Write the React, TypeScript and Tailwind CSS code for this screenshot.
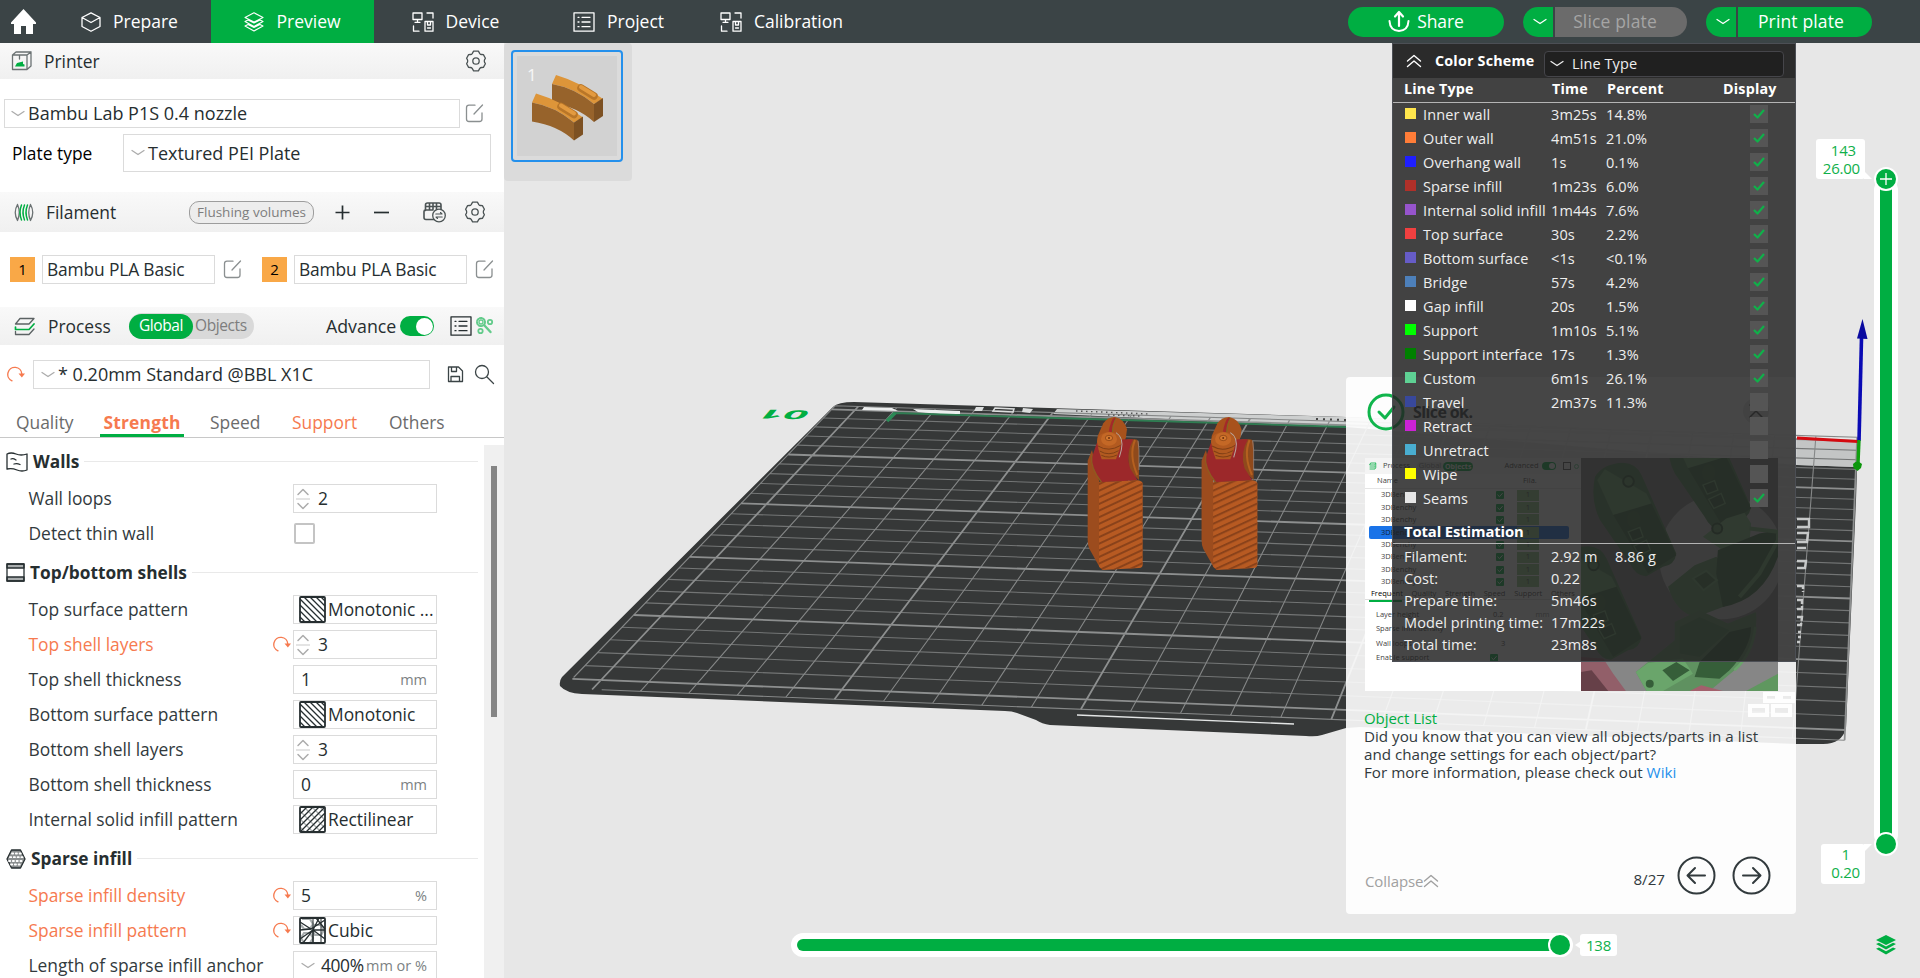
import React from "react";

type Pt = [number, number];

/* ---------- projection of the build plate ---------- */

const Q: Pt[] = [
  [855, 410],
  [1857, 441],
  [1845, 730],
  [601, 680],
];

function project(u: number, v: number): Pt {
  const [[x0, y0], [x1, y1], [x2, y2], [x3, y3]] = Q;
  const dx1 = x1 - x2, dy1 = y1 - y2, dx2 = x3 - x2, dy2 = y3 - y2;
  const sx = x0 - x1 + x2 - x3, sy = y0 - y1 + y2 - y3;
  const det = dx1 * dy2 - dx2 * dy1;
  const g = (sx * dy2 - dx2 * sy) / det;
  const h = (dx1 * sy - sx * dy1) / det;
  const s = u / 25, t = v / 25;
  const w = g * s + h * t + 1;
  return [
    ((x1 - x0 + g * x1) * s + (x3 - x0 + h * x3) * t + x0) / w,
    ((y1 - y0 + g * y1) * s + (y3 - y0 + h * y3) * t + y0) / w,
  ];
}

function seg(a: Pt, b: Pt) {
  return `M${a[0].toFixed(1)} ${a[1].toFixed(1)}L${b[0].toFixed(1)} ${b[1].toFixed(1)}`;
}

const idx = Array.from({ length: 26 }, (_, i) => i);
const vThin = idx.filter((i) => i % 5).map((i) => seg(project(i, -0.4), project(i, 25.7))).join("");
const vBold = idx.filter((i) => i % 5 === 0).map((i) => seg(project(i, -0.4), project(i, 25.7))).join("");
const hThin = idx.filter((i) => i % 5).map((i) => seg(project(-0.6, i), project(25, i))).join("");
const hBold = idx.filter((i) => i % 5 === 0).map((i) => seg(project(-0.6, i), project(25, i))).join("");
const border =
  seg(project(-0.6, 24.9), project(-0.6, -0.4)) +
  seg(project(-0.6, -0.4), project(25, -0.4)) +
  seg(project(0.2, 25.7), project(25, 25.7));

function Model() {
  return (
    <g>
      <path d="M143 108L160 70Q175 50 195 51Q222 56 231 88L228 112L214 150L140 150Z" fill="#a8521c" />
      <path d="M176 96Q182 60 192 53L198 54Q186 72 186 98Z" fill="#a32a2a" />
      <path d="M198 54Q188 72 187 98" fill="none" stroke="#6c7a20" strokeWidth="2" />
      <path d="M231 118H255Q266 118 267 132V240L240 215Q228 165 240 128Z" fill="#8f4a1c" />
      <path d="M255 120Q236 165 262 225" fill="none" stroke="#b5601f" strokeWidth="6" />
      <path d="M264 122L267 150V210" fill="none" stroke="#9a9090" strokeWidth="2" />
      <path d="M113 182L126 150L148 245V500L118 446Q113 435 113 420Z" fill="#9c4c1e" />
      <path d="M125 175L140 130L222 118H250Q226 160 240 205L263 241L155 247Q122 205 125 175Z" fill="#9c282a" />
      <path d="M125 165Q120 205 155 247" fill="none" stroke="#8e5a20" strokeWidth="4" />
      <path d="M147 247L263 241Q278 243 278 252V494Q278 503 268 504L158 510L147 500Z" fill="#b75a22" />
      <path d="M141 125Q142 98 178 95Q212 98 214 128L208 150L198 178H155L146 150Z" fill="#b25a20" />
      <ellipse cx="177" cy="117" rx="24" ry="20" fill="#c46826" />
      <ellipse cx="177" cy="114" rx="11" ry="8" fill="#d5792f" stroke="#7f3c12" strokeWidth="2" />
      <circle cx="177" cy="114" r="3" fill="#6d3210" />
      <path d="M144 138Q176 158 212 136M149 153Q176 170 206 152M154 166Q178 177 201 165" fill="none" stroke="#7f3f16" strokeWidth="3" />
      <path d="M198 98Q222 112 214 150L208 172" fill="none" stroke="#b9a9a0" strokeWidth="3" />
    </g>
  );
}

function Scene() {
  return (
    <svg className="absolute inset-0 h-full w-full" viewBox="504 43 1416 935">
      <defs>
        <pattern id="ridge" width="20" height="18" patternUnits="userSpaceOnUse" patternTransform="rotate(-25)">
          <rect width="20" height="6" fill="#8a421a" />
        </pattern>
        <g id="part">
          <Model />
          <path d="M147 247L263 241Q278 243 278 252V494Q278 503 268 504L158 510L147 500Z" fill="url(#ridge)" />
        </g>
      </defs>
      <path
        d="M833 407Q838 402 854 402L1346 417L1858 441L1856 500L1846 728Q1842 744 1823 744L1797 744L1360 727L1346 728L1322 735Q1316 737 1306 736L1050 725Q1042 724 1036 720L1017 713Q1012 711 1005 711L582 694Q566 693 560 686Q559 681 562 677Z"
        fill="#363838"
      />
      <path d="M1057 409L1346 417L1858 441L1857 467L1797 465L1346 427L1053 414Z" fill="#cdcfcf" />
      <path d="M1797 440L1858 442L1857 467L1797 465Z" fill="#c3c5c5" />
      <path d={hThin} stroke="#737575" strokeWidth="1.1" fill="none" />
      <path d={vThin + border} stroke="#858787" strokeWidth="1.1" fill="none" />
      <path d={hBold + vBold} stroke="#8d8f8f" strokeWidth="1.8" fill="none" />
      <path d="M864 407L892 408L898 411L862 410ZM913 409L960 411V414L940 414L918 412Z" fill="#eceeee" />
      <path d="M976 407L984 407L982 411L974 411ZM1023 408L1033 409L1030 413L1022 412Z" fill="#dcdede" />
      <path d="M995 408L1014 409L1013 412L993 411Z" fill="none" stroke="#dcdede" strokeWidth="1.5" />
      <path d="M1076 411L1150 414M1108 415L1140 416" stroke="#555" strokeWidth="1.4" strokeDasharray="1.5 3.5" />
      <path d="M1316 419L1346 420" stroke="#444" strokeWidth="2" strokeDasharray="2 5" />
      <path d="M888 421L895 413L1346 427" stroke="#2f7d52" strokeWidth="1.8" fill="none" />
      <path d="M887 421L895 413" stroke="#2b8a56" strokeWidth="3.5" />
      <path d="M1077 715L1294 724" stroke="#e3e5e5" strokeWidth="1.3" />
      <text
        transform="translate(812 410.5) rotate(181) skewX(-40) scale(3.4 1)"
        fontFamily="Open Sans"
        fontWeight="700"
        fontSize="12.5"
        fill="#00ae42"
      >
        01
      </text>
      <g stroke="#c6c8c8" strokeWidth="2.4" fill="none">
        <path d="M1797 519L1809 519V527L1797 527M1797 533L1808 533L1807 542H1797M1797 548L1806 548M1797 561L1806 561L1805 568L1797 568" />
        <path d="M1797 586H1803V592M1797 600H1802V609H1797M1797 617H1802L1801 625H1797" strokeDasharray="9 2" />
        <path d="M1798 632H1801M1798 637H1801M1797 642H1800" />
        <path d="M1765 694h12v7h-12zM1781 694h12v7h-12zM1750 706h17v9h-17zM1773 706h17v9h-17z" strokeWidth="4" stroke="#f0f0f0" />
      </g>
      <g transform="translate(1050 400) scale(0.3333)">
        <use href="#part" />
        <use href="#part" transform="translate(340 0) scale(1.015 1)" />
      </g>
      <path d="M1797 438L1858 441.5" stroke="#d40a10" strokeWidth="3" />
      <path d="M1859 441L1861.5 338" stroke="#0a0ab4" strokeWidth="3.6" />
      <path d="M1862.5 319L1867.5 339L1857 338.500Z" fill="#0a0aa0" />
      <path d="M1859 440L1858 464" stroke="#10a010" strokeWidth="3.4" />
      <path d="M1853 464q4-5 9 0l-1 4l-3.500 3l-4-3z" fill="#0c960c" />
    </svg>
  );
}

/* ---------- icons ---------- */

type IconProps = { className?: string };

const Svg = ({ w, h, className = "", children }: { w: number; h: number; className?: string; children: React.ReactNode }) => (
  <svg width={w} height={h} viewBox={`0 0 ${w} ${h}`} className={"shrink-0 " + className} fill="none" stroke="currentColor" strokeWidth="1.3" strokeLinecap="round" strokeLinejoin="round">
    {children}
  </svg>
);

const HomeIcon = () => (
  <Svg w={26} h={26}>
    <path d="M12.500 0L25 13.500V15H22V25H15V17H10V25H3V15H0V13.500Z" fill="#fff" stroke="none" />
  </Svg>
);
const CubeIcon = () => (
  <Svg w={20} h={20}>
    <path d="M10 .8L19 5.500V14.500L10 19.300L1 14.500V5.500ZM1 5.500L10 10.500L19 5.500" />
  </Svg>
);
const LayersIcon = () => (
  <Svg w={20} h={20}>
    <path d="M10 .8L19 5.500L10 10L1 5.500ZM1 9.500L4 8L10 11L16 8L19 9.500L10 14.500ZM1 14L4 12.500L10 15.500L16 12.500L19 14L10 19Z" strokeWidth="1.1" />
  </Svg>
);
const DeviceIcon = () => (
  <Svg w={22} h={20}>
    <path d="M1 1H10V7.500H1ZM5.500 7.500V10M3 10.300H8M15 1H21V6M1.500 14V19.200H7M13 9.500H21V19.200H13ZM15.500 9.500V13H18.500V9.500M15.500 16H18.500" />
  </Svg>
);
const ListIcon = ({ className }: IconProps) => (
  <Svg w={22} h={20} className={className}>
    <path d="M1 .8H21V19.200H1ZM5 5.300H6M9 5.300H17M5 10H6M9 10H17M5 14.700H6M9 14.700H17" />
  </Svg>
);
const EditIcon = () => (
  <Svg w={20} h={19} className="text-[#8a8f90]">
    <path d="M10 1.200H4Q1.500 1.200 1.500 3.700V15Q1.500 17.500 4 17.500H14.500Q17 17.500 17 15V9M9 10L17.500 1" />
  </Svg>
);
const GearIcon = () => (
  <Svg w={22} h={22} className="text-[#4b5354]">
    <path d="M7.200 3.600L8.600 1.200H13.400L14.800 3.600Q15.500 4.600 16.800 4.500L18.400 4.600L20.400 8.200L19.600 9.600Q19 11 19.600 12.400L20.400 13.800L18.400 17.400L16.800 17.500Q15.500 17.400 14.800 18.400L13.400 20.800H8.600L7.200 18.400Q6.500 17.400 5.200 17.500L3.600 17.400L1.600 13.800L2.400 12.400Q3 11 2.400 9.600L1.600 8.200L3.600 4.600L5.200 4.500Q6.500 4.600 7.200 3.600Z" />
    <circle cx="11" cy="11" r="3.200" />
  </Svg>
);
const Chev = ({ className = "" }: IconProps) => (
  <Svg w={14} h={8} className={className}>
    <path d="M1 1.500L7 5.500L13 1.500" />
  </Svg>
);
const RevertIcon = ({ className = "" }: IconProps) => (
  <Svg w={18} h={17} className={"text-[#f67a4f] " + className}>
    <path d="M5 14.800A7 7 0 1 1 14.800 8" strokeWidth="1.400" />
    <path d="M11.500 7.500H18L14.900 11.500Z" fill="#f67a4f" stroke="none" />
  </Svg>
);
const DoubleUp = ({ className = "" }: IconProps) => (
  <Svg w={16} h={14} className={className}>
    <path d="M1.500 7L8 1.500L14.500 7M1.500 12.500L8 7L14.500 12.500" strokeWidth="1.400" />
  </Svg>
);

/* ---------- top bar ---------- */

function Tab({ icon, label, active }: { icon: React.ReactNode; label: string; active?: boolean }) {
  return (
    <div className={"flex h-full w-[163px] items-center justify-center gap-3 text-[17.5px] text-white " + (active ? "bg-[#00ae42]" : "")}>
      {icon}
      <span>{label}</span>
    </div>
  );
}

function TopBar() {
  return (
    <header className="flex h-[43px] shrink-0 items-center bg-[#3b4446] text-white">
      <div className="flex w-12 pl-[11px]">
        <HomeIcon />
      </div>
      <Tab icon={<CubeIcon />} label="Prepare" />
      <Tab icon={<LayersIcon />} label="Preview" active />
      <Tab icon={<DeviceIcon />} label="Device" />
      <Tab icon={<ListIcon />} label="Project" />
      <Tab icon={<DeviceIcon />} label="Calibration" />
      <div className="ml-auto flex h-[30px] pr-[48px] text-[17.5px] tracking-[0.15px]">
        <div className="mr-[19px] flex w-[156px] items-center justify-center gap-[7px] rounded-full bg-[#00ae42]">
          <Svg w={22} h={23}>
            <path d="M11 16V3M7 6.500L11 2L15 6.500" strokeWidth="2.200" />
            <path d="M1.500 11Q2 20.500 11 21Q20 20.500 20.500 11" strokeWidth="2" />
          </Svg>
          <span className="tracking-[-0.1px]">Share</span>
        </div>
        <div className="flex w-[30px] items-center justify-center rounded-l-full bg-[#00ae42] pl-1">
          <Chev />
        </div>
        <div className="mr-[19px] ml-[2px] flex w-[132px] items-center justify-center rounded-r-full bg-[#6b6b6b] pr-3 text-[#a5a5a5]">Slice plate</div>
        <div className="flex w-[30px] items-center justify-center rounded-l-full bg-[#00ae42] pl-1">
          <Chev />
        </div>
        <div className="ml-[2px] flex w-[134px] items-center justify-center rounded-r-full bg-[#00ae42] pr-2">Print plate</div>
      </div>
    </header>
  );
}

/* ---------- left panel ---------- */

const headCls = "flex shrink-0 items-center bg-gradient-to-b from-[#f9f9f9] to-[#f0f0f0]";
const boxCls = "flex items-center border border-[#dbdbdb] bg-white";

function Slot({ n, className = "" }: { n: string; className?: string }) {
  return (
    <div className={"flex items-center " + className}>
      <div className="flex h-[25px] w-[25px] items-center justify-center bg-[#f9a847] text-[15px] text-black">{n}</div>
      <div className={boxCls + " mr-2 ml-[7px] h-[29px] w-[173px] pl-[4px] tracking-[-0.15px]"}>Bambu PLA Basic</div>
      <EditIcon />
    </div>
  );
}

function Section({ icon, title }: { icon: React.ReactNode; title: string }) {
  return (
    <div className="flex h-[41px] shrink-0 items-center pt-[2px] pl-[6px] text-[17.3px] font-bold text-[#262e30]">
      {icon}
      <span className="ml-[5px]">{title}</span>
      <div className="mr-[6px] ml-[5px] h-px flex-1 bg-[#e9e9e9]" />
    </div>
  );
}

function Spin() {
  return (
    <Svg w={14} h={22} className="ml-[2px] text-[#acacac]">
      <path d="M2 6.500L7 1.500L12 6.500M2 15.500L7 20.500L12 15.500" strokeWidth="1.500" />
      <path d="M0 11H14" stroke="#dbdbdb" />
    </Svg>
  );
}

function Pattern({ kind }: { kind: "mono" | "rect" | "cubic" }) {
  return (
    <svg width="27" height="27" viewBox="0 0 27 27" className="ml-[5px] shrink-0" fill="none" stroke="#262e30" strokeWidth="1.3">
      {kind === "mono" && <path d="M1 21L6 26M1 15L12 26M1 9L18 26M1 3L24 26M5 1L26 22M11 1L26 16M17 1L26 10M22 1L26 5" />}
      {kind === "rect" && (
        <>
          <path d="M1 21L6 26M1 13L14 26M1 5L22 26M5 1L26 22M13 1L26 14M21 1L26 6" stroke="#a8adae" />
          <path d="M1 8L8 1M1 14L14 1M1 20L20 1M1 26L26 1M7 26L26 7M13 26L26 13M19 26L26 19" />
        </>
      )}
      {kind === "cubic" && (
        <>
          <path d="M3 2h8l3 5l-3 5H5L2 8M16 8h6l3 5l-3 5h-6l-3-5zM5 16h6l3 5l-3 5H5l-3-5z" stroke="#a8adae" strokeWidth="2.200" />
          <path d="M1 5L12 12L26 3M1 13L12 12M1 22L14 13L26 22M4 26L14 13L20 1M14 13V26M17 1L26 12M14 13L26 13" />
          <path d="M14 1V26M22 1V26" strokeWidth="1" />
        </>
      )}
      <rect x="1" y="1" width="25" height="25" rx="1" strokeWidth="1.8" />
    </svg>
  );
}

type RowProps = { label: string; changed?: boolean; value?: string; unit?: string; spin?: boolean; pattern?: "mono" | "rect" | "cubic"; check?: boolean; drop?: boolean };

function Row({ label, changed, value, unit, spin, pattern, check, drop }: RowProps) {
  return (
    <div className="flex h-[35px] shrink-0 items-center pl-[28.5px]">
      <span className={"w-[244px] whitespace-nowrap " + (changed ? "text-[#f67a4f]" : "text-[#323a3d]")}>{label}</span>
      <span className="flex w-[20.5px]">{changed && <RevertIcon />}</span>
      {check ? (
        <div className="ml-px h-[21px] w-[21px] rounded-xs border-2 border-[#c4c4c4]" />
      ) : (
        <div className={boxCls + " h-[29px] w-[144px]"}>
          {spin && <Spin />}
          {drop && <Chev className="ml-[7px] text-[#acacac]" />}
          {pattern && <Pattern kind={pattern} />}
          <span className={"whitespace-nowrap text-[#262e30] " + (spin ? "ml-[8px]" : pattern ? "ml-[2px]" : drop ? "ml-[6px] tracking-[-0.4px]" : "ml-[7px]")}>{value}</span>
          {unit && <span className="mr-[9px] ml-auto text-[14.5px] whitespace-nowrap text-[#7c8283]">{unit}</span>}
        </div>
      )}
    </div>
  );
}

function Sidebar() {
  return (
    <aside className="flex w-[504px] shrink-0 flex-col overflow-hidden bg-white text-[17.4px] text-[#262e30]">
      <div className={headCls + " h-9 pr-[17px] pl-[11px]"}>
        <Svg w={22} h={20} className="text-[#6b7273]">
          <path d="M1.500 4L5 1H20V15L16 18.500H1.500ZM1.500 4H16V18.500M16 4L20 1M8.500 4V8" />
          <path d="M4 15.500L6 12L12 10.500V13L13.500 13.500V15.500Z" fill="#00ae42" stroke="none" />
        </Svg>
        <span className="ml-[11px]">Printer</span>
        <div className="ml-auto">
          <GearIcon />
        </div>
      </div>
      <div className="mt-5 flex items-center pl-1">
        <div className={boxCls + " mr-[5px] h-[29px] w-[456px] pl-[6px] text-[18px]"}>
          <Chev className="mr-[3px] text-[#acacac]" />
          Bambu Lab P1S 0.4 nozzle
        </div>
        <EditIcon />
      </div>
      <div className="mt-[6px] flex items-center pl-[12px] text-black">
        <span className="w-[111px]">Plate type</span>
        <div className={boxCls + " h-[38px] w-[368px] pl-[7px] text-[18px] text-[#262e30]"}>
          <Chev className="mr-[3px] text-[#acacac]" />
          Textured PEI Plate
        </div>
      </div>
      <div className={headCls + " mt-5 h-10 pr-[18px] pl-[14px]"}>
        <Svg w={20} h={19} className="text-[#6b7273]">
          <path d="M3.500 1.500Q-1 9.500 3.500 17.500M16.500 1.500Q21 9.500 16.500 17.500M3.500 1.500Q7 9.500 3.500 17.500M16.500 1.500Q13 9.500 16.500 17.500" />
          <path d="M7.500 2Q4.500 9.500 7.500 17M10.500 2Q7.500 9.500 10.500 17M13.500 2Q10.500 9.500 13.500 17" stroke="#00ae42" strokeWidth="1.500" />
        </Svg>
        <span className="ml-[12px]">Filament</span>
        <div className="ml-auto flex h-[23px] w-[125px] items-center justify-center rounded-[10px] border border-[#9d9d9d] bg-[#ededed] text-[13.5px] text-[#7d7d7d]">Flushing volumes</div>
        <Svg w={17} h={17} className="ml-[20px]">
          <path d="M8.500 1.500V15.500M1.500 8.500H15.500" strokeLinecap="butt" strokeWidth="1.700" />
        </Svg>
        <Svg w={17} h={17} className="ml-[22px]">
          <path d="M1 8.500H16" strokeLinecap="butt" strokeWidth="1.700" />
        </Svg>
        <Svg w={25} h={22} className="ml-[32px] text-[#4b5354]">
          <path d="M3.500 9.500V4Q3.500 2 5.500 2H17Q19 2 19 4V8.500M7.500 2V8.500M11 2V8.500M14.500 2V8.500M4.500 5.500H18M12 18.500H4Q2 18.500 2 16.500V10.500Q2 9 3.500 9H11" strokeWidth="1.600" />
          <circle cx="17" cy="14.500" r="6.300" />
          <path d="M13.800 13H20L18.500 11.500M20.200 16H14L15.500 17.500" strokeWidth="1.100" />
        </Svg>
        <div className="ml-[17px] flex">
          <GearIcon />
        </div>
      </div>
      <div className="mt-[23px] flex pl-[10px]">
        <Slot n="1" />
        <Slot n="2" className="ml-[19px]" />
      </div>
      <div className={headCls + " mt-[23px] h-[38px] pl-[14px]"}>
        <Svg w={21} h={19} className="text-[#5b6263]">
          <path d="M6 1.500H20L15 7H1.500ZM1.500 14.500V17.500H15L20 12" />
          <path d="M1.500 10V12.500H15L20 7" stroke="#00ae42" strokeWidth="1.700" />
        </Svg>
        <span className="ml-[13px] w-[81px]">Process</span>
        <div className="flex h-[26px] w-[125px] items-center rounded-full bg-[#d9d9d9] text-[15.5px] tracking-[-0.4px]">
          <div className="flex h-[25px] w-16 items-center justify-center rounded-full bg-[#00ae42] font-medium text-white">Global</div>
          <span className="ml-[2px] text-[#7d7d7d]">Objects</span>
        </div>
        <span className="ml-[72px] w-[74px] text-[17.8px]">Advance</span>
        <div className="flex h-5 w-[34px] items-center justify-end rounded-full bg-[#00ae42] pr-px">
          <div className="h-[17px] w-[17px] rounded-full bg-white" />
        </div>
        <ListIcon className="ml-[16px]" />
        <Svg w={20} h={20} className="ml-[3px] text-[#63cb8b]">
          <circle cx="6" cy="6" r="4" strokeWidth="2" strokeDasharray="2 1.400" />
          <circle cx="6" cy="6" r="2" />
          <circle cx="15" cy="6" r="2.200" strokeWidth="1.800" />
          <circle cx="5.500" cy="15" r="2.200" strokeWidth="1.800" />
          <path d="M9.500 9.500L15.500 16" strokeWidth="2.400" />
        </Svg>
      </div>
      <div className="mt-[15px] flex items-center pl-[7px]">
        <RevertIcon />
        <div className={boxCls + " ml-2 h-[29px] w-[397px] pl-[7px] text-[18px]"}>
          <Chev className="mr-[3px] text-[#acacac]" />* 0.20mm Standard @BBL X1C
        </div>
        <Svg w={17} h={17} className="ml-[17px] text-[#3b4446]">
          <path d="M1.500 1H11.500L15.500 5V15.500H1.500ZM4 15.500V10.500H12.500V15.500M4.500 1V5.500H9.500V1" />
        </Svg>
        <Svg w={21} h={21} className="ml-[10px] text-[#3b4446]">
          <circle cx="8" cy="8" r="6.500" />
          <path d="M13 13L19.500 19.500" />
        </Svg>
      </div>
      <div className="mt-[20px] flex h-[29px] shrink-0 border-b border-[#c8c8c8] pl-4 text-[#6b6b6b]">
        <span className="w-[84px]">Quality</span>
        <div className="relative flex w-[84px] justify-center border-b-[3px] border-[#00ae42] font-bold tracking-[0.2px] text-[#f67a4f]">Strength</div>
        <span className="ml-[26px] w-[82px]">Speed</span>
        <span className="w-[97px] text-[#f67a4f]">Support</span>
        <span>Others</span>
      </div>
      <div className="mt-[7px] flex min-h-0 flex-1">
        <div className="-mt-[5px] flex w-[484px] flex-col overflow-hidden">
          <Section
            title="Walls"
            icon={
              <Svg w={22} h={20}>
                <path d="M1 2Q5 0 10 2T21 2V18Q16 20 11 18T1 17ZM5 7Q7 6 10 8M8 12Q11 11 14 12.500" />
              </Svg>
            }
          />
          <Row label="Wall loops" value="2" spin />
          <Row label="Detect thin wall" check />
          <Section
            title="Top/bottom shells"
            icon={
              <Svg w={19} h={19}>
                <path d="M1 1H18V5H1ZM1 14H18V18H1Z" fill="#a9adae" />
                <path d="M1 1H18V18H1Z" />
              </Svg>
            }
          />
          <Row label="Top surface pattern" value="Monotonic ..." pattern="mono" />
          <Row label="Top shell layers" value="3" spin changed />
          <Row label="Top shell thickness" value="1" unit="mm" />
          <Row label="Bottom surface pattern" value="Monotonic" pattern="mono" />
          <Row label="Bottom shell layers" value="3" spin />
          <Row label="Bottom shell thickness" value="0" unit="mm" />
          <Row label="Internal solid infill pattern" value="Rectilinear" pattern="rect" />
          <Section
            title="Sparse infill"
            icon={
              <Svg w={20} h={20}>
                <path d="M5.500 1H14.500L19 10L14.500 19H5.500L1 10Z" fill="#8b8f90" />
                <path d="M6 4.500H15M4 8.200H17M3 12H17M5 15.500H15" stroke="#fff" strokeWidth="1.800" strokeDasharray="1.200 2.600" />
              </Svg>
            }
          />
          <Row label="Sparse infill density" value="5" unit="%" changed />
          <Row label="Sparse infill pattern" value="Cubic" pattern="cubic" changed />
          <Row label="Length of sparse infill anchor" value="400%" unit="mm or %" drop />
        </div>
        <div className="w-5 bg-[#f0f0f0] pt-[21px] pl-[7px]">
          <div className="h-[251px] w-[6px] bg-[#858585]" />
        </div>
      </div>
    </aside>
  );
}

/* ---------- plate thumbnail ---------- */

function PlateThumb() {
  return (
    <div className="absolute top-0 left-0 h-[138px] w-[128px] rounded-[4px] bg-[#dbdbdb] pt-[7px] pl-[7px]">
      <div className="flex h-[112px] w-[112px] items-center justify-center rounded-[4px] border-2 border-[#2490ec]">
        <div className="relative h-[100px] w-[100px] bg-[#d2d2d2]">
          <span className="absolute top-[6px] left-[10px] text-[17px] text-white/80">1</span>
          <svg className="absolute inset-0" width="100" height="100" viewBox="517 56 100 100">
            <g id="blk">
              <path d="M552 84L556 75Q580 82 603 99L594 104Q575 88 552 84Z" fill="#dd9539" />
              <path d="M552 84Q575 88 594 104L594 122Q578 107 552 103Z" fill="#97632b" />
              <path d="M594 104L603 98V116L594 122Z" fill="#7d5123" />
              <path d="M581 88L594 96" stroke="#b97628" strokeWidth="7.500" strokeLinecap="round" />
              <path d="M581 87L594 95" stroke="#e39a3f" strokeWidth="4" strokeLinecap="round" />
            </g>
            <use href="#blk" transform="translate(-20 18.500)" />
          </svg>
        </div>
      </div>
    </div>
  );
}

/* ---------- notification ---------- */

const MiniCheck = () => (
  <Svg w={8} h={8} className="rounded-[1px] bg-[#00ae42] text-white">
    <path d="M1.800 4L3.500 5.700L6.300 2.500" strokeWidth="1" />
  </Svg>
);

function MiniPanel() {
  return (
    <div className="flex w-[216px] flex-col bg-white text-[7.5px] leading-none text-[#444]">
      <div className="flex h-4 items-center bg-[#f4f4f4] pl-1">
        <Svg w={8} h={8} className="text-[#00ae42]">
          <path d="M2 1H7L6 3H1ZM1 5H6L7 3M1 7H6L7 5" strokeWidth=".8" />
        </Svg>
        <span className="ml-[6px] w-[34px]">Process</span>
        <span className="w-[26px] rounded-full bg-[#e2e2e2] text-center text-[#888]">Global</span>
        <span className="rounded-full bg-[#00ae42] px-[2px] py-[1px] text-[7px] font-bold text-white">Objects</span>
        <span className="ml-[31px]">Advanced</span>
        <div className="ml-[3px] flex h-[8px] w-[14px] justify-end rounded-full bg-[#00ae42] p-px">
          <div className="h-[6px] w-[6px] rounded-full bg-white" />
        </div>
        <div className="ml-[7px] h-[8px] w-[8px] border border-[#555]" />
        <div className="ml-[3px] h-[5px] w-[5px] rounded-full border border-[#63cb8b]" />
      </div>
      <div className="flex h-[15px] items-center border-b border-[#e5e5e5] pl-3">
        <span className="w-[146px]">Name</span>Fila.
      </div>
      <div className="flex flex-col pr-[12px] pl-[4px]">
        {[0, 1, 2, 3, 4, 5, 6, 7].map((i) => (
          <div key={i} className={"flex h-[12.4px] items-center rounded-[2px] pl-3 " + (i === 3 ? "bg-[#1a73e8] text-[#123]" : "")}>
            <span className="w-[115px]">3DBenchy</span>
            {i === 3 ? <div className="w-[8px]" /> : <MiniCheck />}
            <div className="ml-[13px] flex h-[11px] w-[22px] items-center justify-center bg-[#8fc985]">1</div>
          </div>
        ))}
      </div>
      <div className="flex h-[12px] items-center justify-between border-b border-[#ddd] pr-[6px] pl-[6px]">
        <span className="text-black">Frequent</span>
        <span>Quality</span>
        <span>Strength</span>
        <span>Speed</span>
        <span>Support</span>
        <span>Others</span>
      </div>
      <div className="ml-[4px] h-[2px] w-[33px] bg-[#00ae42]" />
      <div className="flex flex-col pt-[5px] pl-[11px]">
        <div className="flex h-[14.5px] items-center"><span className="w-[117px]">Layer height</span>0.2<span className="ml-[32px] text-[#888]">mm</span></div>
        <div className="flex h-[14.5px] items-center"><span className="w-[117px]">Sparse infill density</span></div>
        <div className="flex h-[14.5px] items-center"><span className="w-[125px]">Wall loops</span>3</div>
        <div className="flex h-[14.5px] items-center"><span className="w-[114px]">Enable support</span><MiniCheck /></div>
      </div>
    </div>
  );
}

function Boats() {
  return (
    <svg width="197" height="233" viewBox="703 54 593 698" preserveAspectRatio="none">
      <rect x="703" y="54" width="593" height="698" fill="#868686" />
      <circle cx="1125" cy="350" r="187" fill="#c2c2c2" />
      <g id="boat">
        <path d="M745 110Q770 70 830 68Q870 70 885 105L990 340Q985 375 950 380L900 408Q870 410 850 370L760 240Q730 180 745 110Z" fill="#4f8551" />
        <path d="M752 120L775 88L900 160L915 190L845 215L800 225Z" fill="#6aa56b" />
        <path d="M800 225L915 190L990 345L905 400Z" fill="#3c6a3f" />
        <circle cx="846" cy="124" r="16" fill="#5f975f" stroke="#2f5632" strokeWidth="6" />
        <path d="M845 275L880 262L890 290L858 302ZM862 318L900 300L912 330L878 345Z" fill="#365d38" stroke="#6aa56b" strokeWidth="4" />
        <ellipse cx="862" cy="238" rx="20" ry="26" fill="#416f43" />
      </g>
      <use href="#boat" transform="translate(225 -140)" />
      <use href="#boat" transform="translate(-105 250)" />
      <path d="M965 440L1045 375L1110 350L1200 420L1180 480L1130 500L1050 530Q990 520 965 440Z" fill="#5c955e" />
      <path d="M1070 290L1140 235L1195 218L1215 250L1210 310L1130 330Z" fill="#76b277" />
      <path d="M1115 330L1240 280L1296 270V350Q1250 480 1130 500L1110 400Z" fill="#3c6a3f" />
      <path d="M1210 265L1296 275V300L1240 400L1180 470" fill="none" stroke="#6aa56b" strokeWidth="12" />
      <circle cx="1113" cy="265" r="15" fill="#5f975f" stroke="#2f5632" strokeWidth="6" />
      <path d="M1040 415L1080 392L1112 420L1072 450Z" fill="#416f43" stroke="#6aa56b" strokeWidth="6" />
      <path d="M985 545L1060 510L1145 550L1230 515Q1240 600 1165 690L1090 752H900L868 695L985 600Z" fill="#5f9160" />
      <path d="M1000 560L1060 530L1150 570L1060 650L1000 640Z" fill="#4f8551" />
      <path d="M1060 665L1150 575L1215 560Q1215 620 1150 690L1120 715L1045 710Z" fill="#365e39" />
      <path d="M868 695L905 668L1010 655L1040 700L950 752H900Z" fill="#6aa56b" />
      <path d="M948 690L990 665L1030 690L980 722Z" fill="#365e39" />
      <path d="M1165 690Q1220 640 1228 560" fill="none" stroke="#6aa56b" strokeWidth="8" />
      <circle cx="910" cy="730" r="12" fill="#365e39" />
      <path d="M703 650L770 655L800 700L838 752H703Z" fill="#925f69" />
      <path d="M703 695L735 690L785 752H703Z" fill="#664048" />
      <path d="M1030 752L1065 735L1130 752Z" fill="#a3606c" />
      <path d="M1200 752L1296 700V752Z" fill="#5f975f" />
    </svg>
  );
}

function ArrowButton({ flip }: { flip?: boolean }) {
  return (
    <Svg w={39} h={39} className={"text-[#323a3d] " + (flip ? "rotate-180" : "")}>
      <circle cx="19.500" cy="19.500" r="18" strokeWidth="2" />
      <path d="M28 19.500H11M18 12L10.500 19.500L18 27" strokeWidth="2" />
    </Svg>
  );
}

function Notification() {
  return (
    <div className="absolute top-[334px] left-[842px] flex h-[537px] w-[450px] flex-col rounded-[4px] bg-white/90 text-[15.2px] leading-[18px] text-[#323a3d]">
      <div className="flex h-[81px] items-start justify-between pt-[16px] pr-[26px] pl-[21px]">
        <div className="flex items-center">
          <Svg w={38} h={38} className="text-[#10b54c]">
            <circle cx="19" cy="19" r="17" strokeWidth="3" />
            <path d="M12 19L18 25L27 14" strokeWidth="3" />
          </Svg>
          <span className="ml-[8px] text-[16px] font-bold tracking-[-0.6px]">Slice ok.</span>
        </div>
        <Svg w={28} h={28} className="mt-[4px] text-[#444]">
          <circle cx="14" cy="14" r="13" fill="#e4e4e4" stroke="none" />
          <path d="M8 8L20 20M20 8L8 20" strokeWidth="1.500" />
        </Svg>
      </div>
      <div className="ml-[19px] flex h-[233px] w-[413px]">
        <MiniPanel />
        <Boats />
      </div>
      <div className="mt-[18px] ml-[18px] whitespace-nowrap">
        <div className="text-[15px] tracking-[-0.05px] text-[#00ae42]">Object List</div>
        <div>Did you know that you can view all objects/parts in a list</div>
        <div>and change settings for each object/part?</div>
        <div>
          For more information, please check out <span className="text-[#2490ec]">Wiki</span>
        </div>
      </div>
      <div className="mt-auto mb-[19px] flex items-center pr-[25px] pl-[19px]">
        <div className="flex items-center pt-[10px] text-[15px] tracking-[-0.1px] text-[#a0a0a0]">
          Collapse
          <DoubleUp />
        </div>
        <span className="mr-[12px] ml-auto pt-[7px]">8/27</span>
        <ArrowButton />
        <div className="ml-[16px]">
          <ArrowButton flip />
        </div>
      </div>
    </div>
  );
}

/* ---------- colour legend ---------- */

type Line = { c: string; n: string; t?: string; p?: string; on: boolean };
const lines: Line[] = [
  { c: "bg-[#ffe64d]", n: "Inner wall", t: "3m25s", p: "14.8%", on: true },
  { c: "bg-[#ff7d38]", n: "Outer wall", t: "4m51s", p: "21.0%", on: true },
  { c: "bg-[#1f1fff]", n: "Overhang wall", t: "1s", p: "0.1%", on: true },
  { c: "bg-[#b03029]", n: "Sparse infill", t: "1m23s", p: "6.0%", on: true },
  { c: "bg-[#9654cc]", n: "Internal solid infill", t: "1m44s", p: "7.6%", on: true },
  { c: "bg-[#f04040]", n: "Top surface", t: "30s", p: "2.2%", on: true },
  { c: "bg-[#665cc7]", n: "Bottom surface", t: "<1s", p: "<0.1%", on: true },
  { c: "bg-[#4d80ba]", n: "Bridge", t: "57s", p: "4.2%", on: true },
  { c: "bg-[#ffffff]", n: "Gap infill", t: "20s", p: "1.5%", on: true },
  { c: "bg-[#00ff00]", n: "Support", t: "1m10s", p: "5.1%", on: true },
  { c: "bg-[#008000]", n: "Support interface", t: "17s", p: "1.3%", on: true },
  { c: "bg-[#5ed194]", n: "Custom", t: "6m1s", p: "26.1%", on: true },
  { c: "bg-[#38489b]", n: "Travel", t: "2m37s", p: "11.3%", on: false },
  { c: "bg-[#cd22d6]", n: "Retract", on: false },
  { c: "bg-[#49add0]", n: "Unretract", on: false },
  { c: "bg-[#ffff00]", n: "Wipe", on: false },
  { c: "bg-[#e6e6e6]", n: "Seams", on: true },
];
const totals = [
  ["Filament:", "2.92 m", "8.86 g"],
  ["Cost:", "0.22"],
  ["Prepare time:", "5m46s"],
  ["Model printing time:", "17m22s"],
  ["Total time:", "23m8s"],
];

function Legend() {
  return (
    <div className="absolute top-0 left-[888px] flex h-[619px] w-[404px] flex-col border border-[#4c4f55] bg-[#222222]/84 text-[14.5px] leading-[24px] tracking-[0.1px] whitespace-nowrap text-[#eeeeee]">
      <div className="flex h-[34px] shrink-0 items-center bg-[#2b2b2b] pl-[13px]">
        <DoubleUp className="text-white" />
        <span className="ml-[13px] w-[109px] text-[14.3px] font-bold tracking-[0.2px] text-white">Color Scheme</span>
        <div className="mt-[5px] flex h-[26px] w-[240px] items-center rounded-[4px] border border-[#45454a] bg-[#202020] pl-[5px]">
          <Chev />
          <span className="ml-[8px]">Line Type</span>
        </div>
      </div>
      <div className="flex h-[24px] shrink-0 pl-[11px] text-[14.3px] leading-[22px] font-bold tracking-[0.2px] text-white">
        <span className="w-[148px]">Line Type</span>
        <span className="w-[55px]">Time</span>
        <span className="w-[116px]">Percent</span>
        <span>Display</span>
      </div>
      <div className="h-px shrink-0 bg-[#b4b4b4]" />
      {lines.map((l) => (
        <div key={l.n} className="flex h-[24px] shrink-0 items-center pl-[12px]">
          <div className={"mb-[3px] h-[11px] w-[11px] " + l.c} />
          <span className="ml-[7px] w-[128px]">{l.n}</span>
          <span className="w-[55px]">{l.t}</span>
          <span className="w-[144px]">{l.p}</span>
          <div className="mb-[2px] flex h-[18px] w-[18px] items-center justify-center bg-[#555555]">
            {l.on && (
              <Svg w={14} h={12} className="text-[#10b04a]">
                <path d="M2 6L5.500 9.500L12 2" strokeWidth="2.200" strokeLinecap="butt" />
              </Svg>
            )}
          </div>
        </div>
      ))}
      <div className="mt-[8px] h-[24px] pl-[11px] text-[14.8px] font-bold tracking-[-0.1px] text-white">Total Estimation</div>
      <div className="mb-[2px] h-px shrink-0 bg-[#b4b4b4]" />
      {totals.map((t) => (
        <div key={t[0]} className="flex h-[22px] shrink-0 pl-[11px] leading-[22px]">
          <span className="w-[147px]">{t[0]}</span>
          <span className="w-[64px]">{t[1]}</span>
          <span>{t[2]}</span>
        </div>
      ))}
    </div>
  );
}

/* ---------- sliders ---------- */

function Sliders() {
  const tag = "absolute rounded-[3px] bg-white text-[15px] leading-[18px] tracking-[-0.2px] text-[#10b04a]";
  return (
    <>
      <div className="absolute top-[135px] left-[1370px] flex h-[669px] w-6 justify-center rounded-full bg-white">
        <div className="h-full w-3 bg-[#00ae42]" />
        <div className="absolute -top-[11px] left-0 flex h-6 w-6 items-center justify-center rounded-full border-2 border-white bg-[#00ae42] text-white">
          <Svg w={12} h={12}>
            <path d="M6 0V12M0 6H12" />
          </Svg>
        </div>
        <div className="absolute -bottom-[9px] left-0 h-6 w-6 rounded-full border-2 border-white bg-[#00ae42]" />
      </div>
      <div className={tag + " top-[96px] left-[1312px] h-10 w-[49px] pt-[2px] pr-[5px] text-right"}>
        <div className="pr-1">143</div>
        <div>26.00</div>
        <Svg w={8} h={8} className="absolute right-[-7px] bottom-0">
          <path d="M0 0V8H8Z" fill="#fff" stroke="none" />
        </Svg>
      </div>
      <div className={tag + " top-[801px] left-[1317px] h-10 w-[44px] pt-[1px] pr-[5px] text-right"}>
        <div className="pr-[10px]">1</div>
        <div>0.20</div>
        <Svg w={8} h={8} className="absolute top-0 right-[-7px]">
          <path d="M0 8V0H8Z" fill="#fff" stroke="none" />
        </Svg>
      </div>
      <div className="absolute top-[890px] left-[287px] flex h-6 w-[782px] items-center rounded-full bg-white pl-[6px]">
        <div className="h-3 w-[765px] rounded-l-full bg-[#00ae42]" />
        <div className="absolute right-[1px] h-6 w-6 rounded-full border-2 border-white bg-[#00ae42]" />
      </div>
      <div className={tag + " top-[891px] left-[1076px] flex h-[22px] w-[37px] items-center justify-center"}>
        138
        <Svg w={6} h={8} className="absolute left-[-5px]">
          <path d="M6 0V8L0 4Z" fill="#fff" stroke="none" />
        </Svg>
      </div>
      <svg className="absolute top-[892px] left-[1371px]" width="22" height="21" viewBox="0 0 22 21" fill="#00ae42">
        <path d="M11 0L21 5L11 10L1 5ZM1 9L4 7.800L11 11.500L18 7.800L21 9L11 14.500ZM1 13.800L4 12.500L11 16.200L18 12.500L21 13.800L11 19.500Z" />
      </svg>
    </>
  );
}

export default function App() {
  return (
    <div className="flex h-[978px] w-[1920px] flex-col overflow-hidden bg-[#e7e7e7] font-['Open_Sans','Noto_Sans',sans-serif]">
      <TopBar />
      <div className="flex min-h-0 flex-1">
        <Sidebar />
        <main className="relative flex-1 overflow-hidden bg-[#e7e7e7]">
          <Scene />
          <PlateThumb />
          <Notification />
          <Legend />
          <Sliders />
        </main>
      </div>
    </div>
  );
}
